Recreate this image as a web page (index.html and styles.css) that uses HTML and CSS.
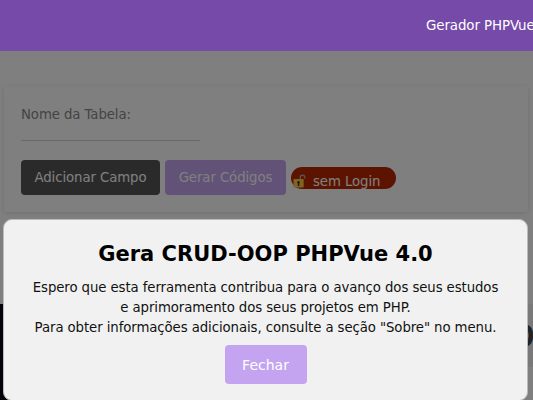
FILE: index.html
```html
<!DOCTYPE html>
<html lang="pt-BR">
<head>
<meta charset="utf-8">
<title>Gerador PHPVue</title>
<link rel="stylesheet" href="styles.css">
</head>
<body>
<header class="navbar"><span class="brand">Gerador PHPVue</span></header>
<main class="page">
  <section class="card">
    <div class="field"><span class="label">Nome da Tabela:</span></div>
    <div class="actions">
      <button class="btn dark">Adicionar Campo</button>
      <button class="btn lilac">Gerar Códigos</button>
      <span class="badge">
        <svg class="lock" viewBox="0 0 13 14" width="13" height="14">
          <path d="M7.2 6V3.4a2.3 2.3 0 0 1 4.6 0V4.6" fill="none" stroke="#b9a9a3" stroke-width="1.3"/>
          <rect x="0.5" y="5" width="10.2" height="8.6" rx="0.8" fill="#ffc83d"/>
          <path d="M5.5 7a1.4 1.4 0 0 1 .8 2.5V12H4.8V9.5A1.4 1.4 0 0 1 5.5 7z" fill="#30304a"/>
        </svg>
        <span class="badge-text">sem Login</span>
      </span>
    </div>
  </section>
  <section class="preview">
    <div class="code"></div>
    <div class="sheet">o</div>
  </section>
</main>
<div class="overlay">
  <div class="modal">
    <h1>Gera CRUD-OOP PHPVue 4.0</h1>
    <p>Espero que esta ferramenta contribua para o avanço dos seus estudos<br>e aprimoramento dos seus projetos em PHP.<br>Para obter informações adicionais, consulte a seção "Sobre" no menu.</p>
    <button class="close">Fechar</button>
  </div>
</div>
</body>
</html>
```
FILE: styles.css
```css
* { box-sizing: border-box; }
body {
  margin: 0;
  width: 533px;
  height: 400px;
  overflow: hidden;
  background: #fff;
  font-family: Verdana, "DejaVu Sans", sans-serif;
  font-size: 13.3px;
  letter-spacing: -0.09px;
}
.navbar {
  height: 51px;
  background: #764aa9;
  color: #fff;
  display: flex;
  align-items: center;
  padding-left: 426px;
  white-space: nowrap;
  position: relative;
  z-index: 3;
}
.brand { font-size: 13.4px; letter-spacing: -0.1px; }
.page { padding-top: 35px; }
.card {
  height: 126px;
  margin: 0 5px 0 4px;
  padding: 17px;
  border-radius: 3px;
  box-shadow: 0 1px 5px rgba(0, 0, 0, 0.13);
}
.field {
  width: 179px;
  height: 38px;
  padding-top: 2px;
  border-bottom: 1px solid #d0d0d0;
  color: #888;
  line-height: 20px;
}
.actions {
  display: flex;
  gap: 5px;
  margin-top: 19px;
}
.btn {
  height: 35px;
  padding: 0;
  border: 0;
  border-radius: 4px;
  font: inherit;
  letter-spacing: inherit;
  color: #fff;
  white-space: nowrap;
}
.dark { width: 139px; background: #545454; }
.lilac { width: 121px; background: #c4a4f0; }
.badge {
  width: 105px;
  height: 22px;
  margin-top: 7px;
  padding: 0 0 0 2px;
  border-radius: 11px;
  background: #b82800;
  color: #fff;
  display: flex;
  white-space: nowrap;
}
.lock { margin-top: 7px; flex: none; }
.badge-text { margin-left: 7px; line-height: 29px; }
.preview {
  height: 96px;
  margin-top: 92px;
  display: flex;
  justify-content: space-between;
}
.code { width: 250px; background: #080410; }
.sheet {
  width: 33px;
  height: 63px;
  padding-left: 12px;
  background: #f2f2f2;
  color: #444;
  font-size: 37px;
  -webkit-text-stroke: 1px #444;
  line-height: 59px;
}
.overlay {
  position: fixed;
  inset: 51px 0 0;
  z-index: 2;
  background: rgba(0, 0, 0, 0.5);
}
.modal {
  width: 525px;
  height: 182px;
  margin: 168px 0 0 3px;
  padding-top: 21px;
  border: 1px solid #bbb;
  border-radius: 9px;
  background: #f1f1f1;
  text-align: center;
  white-space: nowrap;
}
h1 {
  margin: 0;
  font-size: 21px;
  letter-spacing: 0;
  line-height: 26px;
}
p {
  margin: 11px 0 7px;
  line-height: 20px;
  color: #111;
}
.close {
  width: 82px;
  height: 39px;
  padding: 0;
  border: 0;
  border-radius: 4px;
  background: #c4a4f0;
  color: #fff;
  font: inherit;
  font-size: 14px;
}
```
